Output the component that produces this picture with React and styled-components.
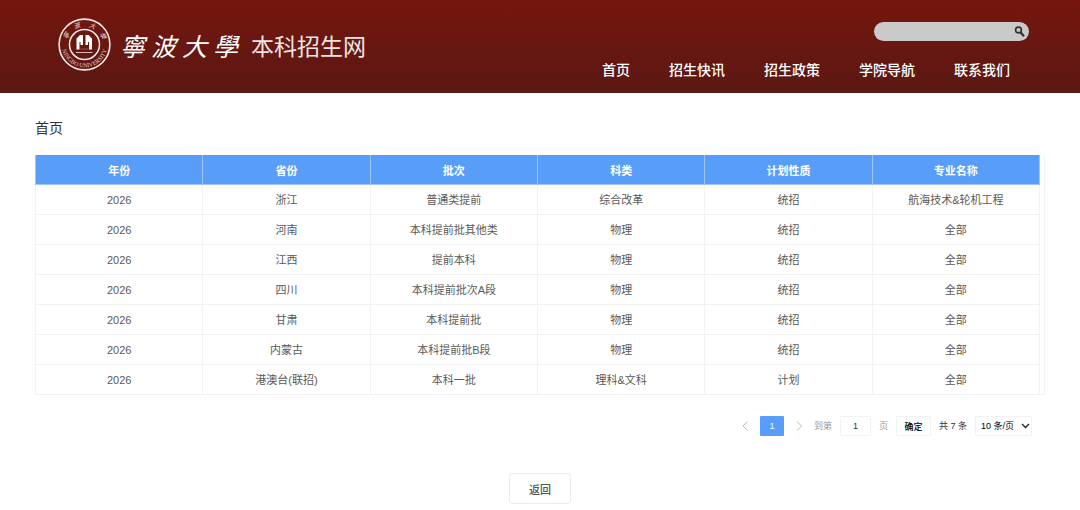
import React, { useState } from 'react'
import styled, { createGlobalStyle, ThemeProvider } from 'styled-components'

const theme = {
    primary: '#589ef8',
    line: '#f2f2f2',
    text: '#595959',
    muted: '#999',
}

const GlobalStyle = createGlobalStyle`
* {
box-sizing: border-box;
}
body {
margin: 0;
background: #fff;
color: #333;
font-family: "Liberation Sans", "Noto Sans CJK SC", sans-serif;
}
button, input, select {
font-family: inherit;
}
`;

const Header = styled.header`
display: flex;
justify-content: space-between;
height: 93px;
padding: 0 51px 0 58px;
background: linear-gradient(#75160e, #5b1814);
color: #fff;
`;

const Brand = styled.a`
display: flex;
align-items: center;
height: 89px;
color: inherit;
text-decoration: none;
`;

const Seal = styled.svg`
width: 53px;
height: 53px;
`;

const SchoolName = styled.span`
display: flex;
gap: 6px;
margin-left: 9px;
font-family: "Noto Sans CJK TC", sans-serif;
font-size: 25px;
font-style: italic;
line-height: 40px;
`;

const SiteName = styled.span`
margin-left: 13px;
font-size: 23px;
line-height: 40px;
padding-top: 4px;
color: #eee3e2;
`;

const HeaderSide = styled.div`
display: flex;
flex-direction: column;
align-items: flex-end;
padding-top: 22px;
`;

const SearchForm = styled.form`
display: flex;
align-items: center;
width: 155px;
height: 19px;
padding: 0 4px 0 10px;
border-radius: 10px;
background: #cacaca;
`;

const SearchInput = styled.input`
flex: 1;
min-width: 0;
height: 17px;
padding: 0;
border: 0;
outline: 0;
background: transparent;
font-size: 11px;
`;

const SearchButton = styled.button`
display: flex;
padding: 0;
border: 0;
background: none;
cursor: pointer;
`;

const Nav = styled.nav`
display: flex;
gap: 39px;
margin-top: 18px;
padding-right: 19px;
`;

const NavLink = styled.a`
color: #fff;
font-size: 14px;
font-weight: 500;
line-height: 22px;
text-decoration: none;
white-space: nowrap;
`;

const Main = styled.main`
padding: 24px 35px 0;
`;

const Title = styled.h1`
margin: 0;
font-size: 14px;
font-weight: 400;
line-height: 22px;
`;

const TableFrame = styled.div`
margin-top: 16px;
padding-right: 4px;
border: 1px solid ${({ theme }) => theme.line};
border-top: 0;
border-left: 0;
`;

const Table = styled.table`
width: 100%;
table-layout: fixed;
border-collapse: collapse;
font-size: 11px;
line-height: 16px;
text-align: center;
`;

const HeadCell = styled.th`
height: 29px;
padding: 4px 4px 0;
border: 1px solid #9cc5f9;
border-top: 0;
background: ${({ theme }) => theme.primary};
color: #fff;
`;

const Cell = styled.td`
height: 30px;
padding: 2px 4px 0;
border: 1px solid ${({ theme }) => theme.line};
border-bottom: ${({ $last }) => ($last ? '0' : '')};
color: ${({ theme }) => theme.text};
`;

const Pager = styled.div`
display: flex;
align-items: center;
justify-content: flex-end;
gap: 8px;
margin-top: 21px;
padding-right: 13px;
font-size: 9px;
line-height: 20px;
color: ${({ theme }) => theme.muted};
white-space: nowrap;
`;

const ArrowButton = styled.button`
display: flex;
align-items: center;
justify-content: center;
width: 14px;
height: 20px;
padding: 0;
border: 0;
background: none;
color: #bbb;
`;

const PageButton = styled.button`
width: 24px;
height: 20px;
padding: 0;
border: 0;
border-radius: 1px;
background: ${({ theme }) => theme.primary};
color: #fff;
font-size: 9px;
`;

const PageInput = styled.input`
width: 31px;
height: 20px;
padding: 0;
border: 1px solid ${({ theme }) => theme.line};
border-radius: 1px;
color: #333;
font-size: 9px;
text-align: center;
`;

const GoButton = styled.button`
width: 35px;
height: 20px;
padding: 0;
border: 1px solid ${({ theme }) => theme.line};
border-radius: 1px;
background: #fff;
color: #000;
font-size: 9px;
font-weight: 500;
`;

const Total = styled.span`
color: #333;
`;

const SizeBox = styled.span`
display: grid;
align-items: center;
width: 57px;
height: 20px;
`;

const SizeSelect = styled.select`
grid-area: 1 / 1;
appearance: none;
width: 100%;
height: 20px;
padding: 0 0 0 5px;
border: 1px solid ${({ theme }) => theme.line};
border-radius: 1px;
background: #fff;
color: #000;
font-size: 9px;
`;

const SelectArrow = styled.svg`
grid-area: 1 / 1;
justify-self: end;
margin-right: 2px;
pointer-events: none;
`;

const Footer = styled.div`
display: flex;
justify-content: center;
margin-top: 37px;
`;

const BackButton = styled.button`
width: 62px;
height: 31px;
padding: 0;
border: 1px solid #e9ebf2;
border-radius: 3px;
background: #fff;
color: #555;
font-size: 11px;
font-weight: 500;
`;

const navItems = ['首页', '招生快讯', '招生政策', '学院导航', '联系我们']

const columns = ['年份', '省份', '批次', '科类', '计划性质', '专业名称']

const plans = [
    ['2026', '浙江', '普通类提前', '综合改革', '统招', '航海技术&轮机工程'],
    ['2026', '河南', '本科提前批其他类', '物理', '统招', '全部'],
    ['2026', '江西', '提前本科', '物理', '统招', '全部'],
    ['2026', '四川', '本科提前批次A段', '物理', '统招', '全部'],
    ['2026', '甘肃', '本科提前批', '物理', '统招', '全部'],
    ['2026', '内蒙古', '本科提前批B段', '物理', '统招', '全部'],
    ['2026', '港澳台(联招)', '本科一批', '理科&文科', '计划', '全部'],
]

const SchoolSeal = () => (
    <Seal viewBox="0 0 53 53" fill="none" aria-hidden="true">
        <defs>
            <path id="sealTop" d="M8.5 26.5a18 18 0 0 1 36 0" />
            <path id="sealBottom" d="M3.800 23.500a22.900 22.900 0 1 0 45.400 0" />
        </defs>
        <circle cx="26.5" cy="26.5" r="25.4" stroke="#f5e9e7" strokeWidth="1.6" />
        <circle cx="26.5" cy="26.5" r="15" stroke="#f5e9e7" strokeWidth="1.5" />
        <path d="M18.500 31.500V20.500l3.500-3.500h3v10h-2.500v-3h-1v7.500zM34 31.500V20.500L30.500 17h-3v10H30v-3h1v7.500z" fill="#fff" />
        <path d="M22.500 31h7.500" stroke="#96504b" strokeWidth="1" />
        <path d="M18 34.500h16.500" stroke="#d9b9b5" strokeWidth="1" />
        <text fill="#f0dedc" fontSize="6.5" fontStyle="italic" fontFamily="Noto Sans CJK TC, sans-serif">
            <textPath href="#sealTop" startOffset="5">寧</textPath>
            <textPath href="#sealTop" startOffset="18">波</textPath>
            <textPath href="#sealTop" startOffset="32">大</textPath>
            <textPath href="#sealTop" startOffset="45">學</textPath>
        </text>
        <text fill="#e3c8c5" fontSize="6" fontFamily="Liberation Serif, serif">
            <textPath href="#sealBottom" startOffset="50%" textAnchor="middle">NINGBO UNIVERSITY</textPath>
        </text>
    </Seal>
)

const App = () => {
    const [page, setPage] = useState('1')

    return <ThemeProvider theme={theme}>
        <GlobalStyle />
        <Header>
            <Brand href="#home">
                <SchoolSeal />
                <SchoolName>
                    <span>寧</span>
                    <span>波</span>
                    <span>大</span>
                    <span>學</span>
                </SchoolName>
                <SiteName>本科招生网</SiteName>
            </Brand>
            <HeaderSide>
                <SearchForm onSubmit={(e) => e.preventDefault()}>
                    <SearchInput type="text" aria-label="搜索" />
                    <SearchButton type="submit" aria-label="搜索">
                        <svg width="11" height="11" viewBox="0 0 11 11" fill="none" stroke="#333">
                            <circle cx="4.500" cy="4" r="2.900" strokeWidth="1.600" />
                            <path d="M6.500 6.300l3.500 4" strokeWidth="2.200" />
                        </svg>
                    </SearchButton>
                </SearchForm>
                <Nav>
                    {navItems.map((item) => <NavLink key={item} href="#nav">{item}</NavLink>)}
                </Nav>
            </HeaderSide>
        </Header>

        <Main>
            <Title>首页</Title>
            <TableFrame>
                <Table>
                    <thead>
                        <tr>
                            {columns.map((name) => <HeadCell key={name}>{name}</HeadCell>)}
                        </tr>
                    </thead>
                    <tbody>
                        {plans.map((row, i) => (
                            <tr key={row[1]}>
                                {row.map((value, j) => <Cell key={j} $last={i === plans.length - 1}>{value}</Cell>)}
                            </tr>
                        ))}
                    </tbody>
                </Table>
            </TableFrame>

            <Pager>
                <ArrowButton aria-label="上一页" disabled>
                    <svg width="8" height="10" viewBox="0 0 8 10" fill="none" stroke="currentColor">
                        <path d="M6.500 .5L2 5l4.500 4.500" />
                    </svg>
                </ArrowButton>
                <PageButton>1</PageButton>
                <ArrowButton aria-label="下一页" disabled>
                    <svg width="8" height="10" viewBox="0 0 8 10" fill="none" stroke="currentColor">
                        <path d="M2 .5L6.500 5 2 9.500" />
                    </svg>
                </ArrowButton>
                <label htmlFor="page">到第</label>
                <PageInput id="page" value={page} onChange={(e) => setPage(e.target.value)} />
                <span>页</span>
                <GoButton>确定</GoButton>
                <Total>共 7 条</Total>
                <SizeBox>
                    <SizeSelect aria-label="每页条数" defaultValue="10">
                        <option value="10">10 条/页</option>
                        <option value="20">20 条/页</option>
                        <option value="50">50 条/页</option>
                    </SizeSelect>
                    <SelectArrow width="9" height="6" viewBox="0 0 9 6" fill="none" stroke="#222" strokeWidth="1.300">
                        <path d="M1 1l3.500 3.500L8 1" />
                    </SelectArrow>
                </SizeBox>
            </Pager>

            <Footer>
                <BackButton>返回</BackButton>
            </Footer>
        </Main>
    </ThemeProvider>
}

export default App
